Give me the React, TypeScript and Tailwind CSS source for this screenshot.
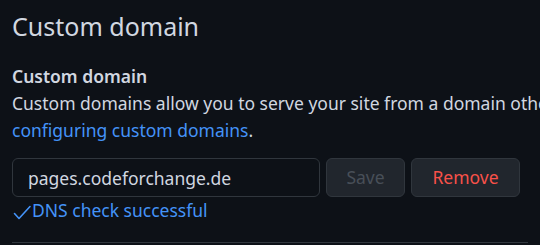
export default function App() {
  return (
    <div
      className="h-[245px] w-[540px] overflow-hidden bg-[#0d1117] text-[#d1d7e0]"
      style={{ fontFamily: '"Noto Sans", "Open Sans", sans-serif' }}
    >
      <div className="px-3 pt-[8px]">
        <h2 className="text-[25px] font-normal leading-[36px] text-[#d1d7e0]">
          Custom domain
        </h2>
        <div className="mt-[19px] text-[17.5px] leading-[27px]">
          <div className="font-semibold">Custom domain</div>
          <p className="whitespace-nowrap">
            Custom domains allow you to serve your site from a domain other than
            codeforchange.github.io. Learn more about
          </p>
          <p>
            <a className="text-[#4493f8]" href="#">
              configuring custom domains
            </a>
            .
          </p>
        </div>
        <div className="mt-[14px] flex items-center gap-[6px]">
          <input
            readOnly
            value="pages.codeforchange.de"
            className="h-[39px] w-[308px] rounded-md border border-[#30363d] bg-[#0d1117] px-[15px] text-[17.5px] text-[#d1d7e0] outline-none"
          />
          <button
            disabled
            className="h-[39px] w-[79px] rounded-md border border-[#30363d] bg-[#21262d] text-[17.5px] text-[#484f58]"
          >
            Save
          </button>
          <button className="h-[39px] w-[109px] rounded-md border border-[#30363d] bg-[#21262d] text-[17.5px] text-[#f85149]">
            Remove
          </button>
        </div>
        <div className="mt-[1px] flex items-center text-[17.5px] leading-[24px] text-[#4493f8]">
          <svg width="20" height="24" viewBox="0 0 20 24" fill="none" className="shrink-0">
            <path d="M2.5 15.5 L7 20.5 L18 8.5" stroke="currentColor" strokeWidth="1.6" strokeLinecap="round" strokeLinejoin="round" />
          </svg>
          DNS check successful
        </div>
        <div className="mt-[20px] border-t border-[#30363d]" />
      </div>
    </div>
  );
}
